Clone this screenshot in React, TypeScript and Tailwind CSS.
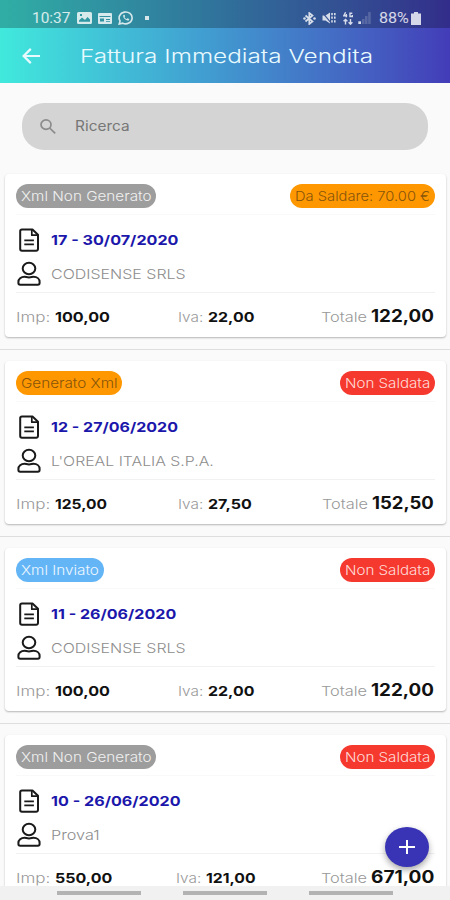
import { useLayoutEffect, useRef, useState } from "react";

type FitProps = { text: string; width: number; className?: string };

// Stretches a line of text to a given width
function Fit({ text, width, className = "" }: FitProps) {
  const ref = useRef<HTMLSpanElement>(null);
  const [scale, setScale] = useState(1);

  useLayoutEffect(() => {
    if (ref.current) setScale(width / ref.current.offsetWidth);
  }, [text, width]);

  return (
    <span className={`inline-block shrink-0 whitespace-nowrap ${className}`} style={{ width }}>
      <span ref={ref} className="inline-block origin-left" style={{ transform: `scaleX(${scale})` }}>
        {text}
      </span>
    </span>
  );
}

type Badge = { text: string; width: number; className: string };

type Invoice = {
  status: Badge;
  payment: Badge;
  title: [string, number];
  customer: [string, number];
  imp: [string, number];
  iva: [string, number];
  ivaLeft: number;
  total: [string, number];
};

const GREY = "bg-[#9d9d9d] text-[#f0f0f0]";
const ORANGE = "bg-[#ff9800] text-[#86540c]";
const BLUE = "bg-[#64b5f6] text-[#edf7ff]";
const RED = "bg-[#f6392e] text-[#ffdcd9]";

const invoices: Invoice[] = [
  {
    status: { text: "Xml Non Generato", width: 140, className: GREY },
    payment: { text: "Da Saldare: 70.00 €", width: 145, className: ORANGE },
    title: ["17 - 30/07/2020", 128],
    customer: ["CODISENSE SRLS", 135],
    imp: ["100,00", 55],
    iva: ["22,00", 46],
    ivaLeft: 178,
    total: ["122,00", 63],
  },
  {
    status: { text: "Generato Xml", width: 106, className: ORANGE },
    payment: { text: "Non Saldata", width: 95, className: RED },
    title: ["12 - 27/06/2020", 127],
    customer: ["L'OREAL ITALIA S.P.A.", 163],
    imp: ["125,00", 52],
    iva: ["27,50", 44],
    ivaLeft: 178,
    total: ["152,50", 62],
  },
  {
    status: { text: "Xml Inviato", width: 88, className: BLUE },
    payment: { text: "Non Saldata", width: 95, className: RED },
    title: ["11 - 26/06/2020", 125],
    customer: ["CODISENSE SRLS", 135],
    imp: ["100,00", 55],
    iva: ["22,00", 46],
    ivaLeft: 178,
    total: ["122,00", 63],
  },
  {
    status: { text: "Xml Non Generato", width: 140, className: GREY },
    payment: { text: "Non Saldata", width: 95, className: RED },
    title: ["10 - 26/06/2020", 129],
    customer: ["Prova1", 48],
    imp: ["550,00", 57],
    iva: ["121,00", 49],
    ivaLeft: 176,
    total: ["671,00", 63],
  },
];

function Pill({ text, width, className }: Badge) {
  return (
    <div
      className={`flex h-6 items-center justify-center rounded-full pt-px text-[13.5px] leading-5 font-light ${className}`}
      style={{ width }}
    >
      <Fit text={text} width={width - 10} />
    </div>
  );
}

function FileIcon() {
  return (
    <svg className="h-6 w-[26px] shrink-0" viewBox="0 0 26 24" fill="none" stroke="#1a1a1a" strokeWidth="2" strokeLinejoin="round">
      <path d="M6 1.500h10.500L22 6.700V21a1.800 1.800 0 0 1-1.800 1.800H6A1.800 1.800 0 0 1 4.200 21V3.300A1.800 1.800 0 0 1 6 1.500z" />
      <path d="M15.800 1.800v5.400h6" strokeWidth="1.700" />
      <path d="M8.300 12.300h9.600M8.300 16.300h9.600" strokeWidth="1.700" />
    </svg>
  );
}

function UserIcon() {
  return (
    <svg className="h-[26px] w-[26px] shrink-0" viewBox="0 0 26 26" fill="none" stroke="#1a1a1a" strokeWidth="2">
      <ellipse cx="13" cy="7.500" rx="6.300" ry="5.700" />
      <path d="M8.500 15.700c1.500 0 2.300.7 4.500.7s3-.7 4.500-.7c3.500 0 6.100 2.200 6.100 5.200v1.200c0 .9-.8 1.600-1.800 1.600H4.200c-1 0-1.800-.7-1.800-1.600v-1.200c0-3 2.600-5.200 6.100-5.200z" />
    </svg>
  );
}

function InvoiceCard({ invoice }: { invoice: Invoice }) {
  return (
    <div className="h-[187px] shrink-0 border-b border-[#dedede] pt-[11px] pr-1 pl-[5px]">
      <div className="h-[163px] rounded-[4px] bg-white px-[11px] shadow-[0_1px_2px_rgba(0,0,0,0.28)]">
        <div className="flex h-[41px] items-center justify-between border-b border-[#f9f9f9] pt-[3px]">
          <Pill {...invoice.status} />
          <Pill {...invoice.payment} />
        </div>
        <div className="h-[78px] border-b border-[#f1f1f1] pt-[13px]">
          <div className="flex h-6 items-center gap-[9px]">
            <FileIcon />
            <Fit text={invoice.title[0]} width={invoice.title[1]} className="text-[13.5px] font-bold text-[#1c17ab]" />
          </div>
          <div className="mt-[10px] flex h-6 items-center gap-[9px]">
            <UserIcon />
            <Fit text={invoice.customer[0]} width={invoice.customer[1]} className="text-[13.5px] font-light text-[#8d8d8d]" />
          </div>
        </div>
        <div className="flex h-11 items-baseline pt-[11px] pr-px text-[13.5px] leading-6 text-[#999]">
          <div className="flex shrink-0 items-baseline gap-[5px]" style={{ width: invoice.ivaLeft - 16 }}>
            <Fit text="Imp:" width={34} className="font-light" />
            <Fit text={invoice.imp[0]} width={invoice.imp[1]} className="font-bold text-[#111]" />
          </div>
          <div className="flex items-baseline gap-[5px]">
            <Fit text="Iva:" width={25} className="font-light" />
            <Fit text={invoice.iva[0]} width={invoice.iva[1]} className="font-bold text-[#111]" />
          </div>
          <div className="ml-auto flex items-baseline gap-[4px]">
            <Fit text="Totale" width={46} className="font-light" />
            <Fit text={invoice.total[0]} width={invoice.total[1]} className="text-[17px] font-bold text-[#111]" />
          </div>
        </div>
      </div>
    </div>
  );
}

function StatusBar() {
  return (
    <div className="flex h-7 items-center bg-black/25 pt-2 pr-[29px] pl-8 font-[Roboto] text-[15px] text-white/80">
      <Fit text="10:37" width={38} />
      <svg className="ml-[7px] h-3 w-[15px]" viewBox="0 0 15 12" fill="currentColor">
        <path fillRule="evenodd" d="M1.500 0h12A1.500 1.500 0 0 1 15 1.500v9a1.500 1.500 0 0 1-1.500 1.500h-12A1.500 1.500 0 0 1 0 10.500v-9A1.500 1.500 0 0 1 1.500 0zM2 9.800h11V7.500L10.500 5 8 8 5 5.500 2 8.500zM3 2v2h2V2z" />
      </svg>
      <svg className="ml-[6px] h-[11px] w-[14px]" viewBox="0 0 14 11" fill="currentColor">
        <path fillRule="evenodd" d="M1 0h12a1 1 0 0 1 1 1v9a1 1 0 0 1-1 1H1a1 1 0 0 1-1-1V1a1 1 0 0 1 1-1zM1.500 3v1h11V3zM2 5.500v3h4v-3zM8 6v1h4V6zM8 8v.8h4V8z" />
      </svg>
      <svg className="ml-[6px] h-[14px] w-[16px]" viewBox="0 0 16 14" fill="none" stroke="currentColor" strokeWidth="1.600">
        <path d="M1.200 13l.9-3A6.500 5.900 0 1 1 4.800 12.200z" />
        <path d="M5.300 4c-.8 2.600 2.500 5.800 5.500 5.600l.5-1.600-1.800-.8-1 .8C7.500 7.600 7 7 6.500 6l.7-.8L6.500 3.700z" fill="currentColor" stroke="none" />
      </svg>
      <span className="ml-[11px] size-1 bg-current" />

      <svg className="ml-auto h-[13px] w-[13px]" viewBox="0 0 13 13" fill="none" stroke="currentColor" strokeWidth="1.700">
        <path d="M2.500 3.500l7 6L6.300 12V1l3.200 2.500-7 6" />
        <circle cx="1.500" cy="6.500" r="1.300" fill="currentColor" stroke="none" />
        <circle cx="11.500" cy="6.500" r="1.300" fill="currentColor" stroke="none" />
      </svg>
      <svg className="ml-[6px] h-3 w-[14px]" viewBox="0 0 14 12">
        <path d="M.5 3.500h3L8 .5v11L3.500 8.500h-3z" fill="currentColor" />
        <path d="M.8.8l8.400 10.400" stroke="#3b5597" strokeWidth="1.200" />
        <path d="M10 1v10M12.800 1v10" stroke="currentColor" strokeWidth="1.600" strokeDasharray="2.200 1.400" />
      </svg>
      <svg className="ml-[7px] h-[13px] w-[10px]" viewBox="0 0 10 13" fill="none" stroke="currentColor" strokeWidth="1.400">
        <path d="M2.600.3L.8 3.800h3.400M3.300 2v3.300M9.300 1.200H7v3.300h2.300V3" />
        <path d="M2.500 12.500V7.500M.6 9.300l1.900-1.900 1.900 1.900M7.500 7v5M5.600 10.300l1.900 1.900 1.900-1.900" />
      </svg>
      <svg className="ml-[5px] h-[12px] w-[13px]" viewBox="0 0 13 12" fill="currentColor">
        <path d="M.3 9.300h2.700V12H.3z" />
        <path d="M4 7h2.500v5H4zM7 4h2.500v8H7zM10.200 0h2.500v12h-2.500z" opacity=".22" />
      </svg>
      <Fit text="88%" width={30} className="ml-[8px]" />
      <svg className="ml-[2px] h-[13px] w-[10px]" viewBox="0 0 10 13" fill="currentColor">
        <path d="M3 0h4v1.500h3V13H0V1.500h3z" />
      </svg>
    </div>
  );
}

export default function App() {
  return (
    <div className="relative flex h-[900px] w-[450px] flex-col overflow-hidden bg-[#fafafa] font-[Inter,sans-serif]">
      <header className="h-[83px] shrink-0 bg-linear-to-r from-[#40e9dc] via-[#4196cf] to-[#433cb8]">
        <StatusBar />
        <div className="flex h-[55px] items-center pl-[22px] text-[#e9faff]">
          <svg className="h-4 w-[18px]" viewBox="0 0 18 16" fill="none" stroke="currentColor" strokeWidth="2.200">
            <path d="M18 8H2M8.800.9L1.600 8l7.200 7.100" />
          </svg>
          <Fit text="Fattura Immediata Vendita" width={293} className="mt-[3px] ml-10 text-[19px] font-light" />
        </div>
      </header>

      <div className="shrink-0 px-[22px] pt-5 pb-[13px]">
        <div className="flex h-[47px] items-center rounded-[22px] bg-[#d4d4d4] pl-[18px] text-[#777]">
          <svg className="h-[15px] w-4 text-[#8b8b8b]" viewBox="0 0 16 15" fill="none" stroke="currentColor" strokeWidth="1.700">
            <ellipse cx="6" cy="5.600" rx="5" ry="4.700" />
            <path d="M9.600 9l5.600 5.300" />
          </svg>
          <Fit text="Ricerca" width={55} className="-mt-0.5 ml-[19px] text-[14px]" />
        </div>
      </div>

      <main className="flex min-h-0 flex-1 flex-col overflow-hidden">
        {invoices.map((invoice) => (
          <InvoiceCard key={invoice.title[0]} invoice={invoice} />
        ))}
      </main>

      <nav className="flex h-[14px] shrink-0 justify-center gap-[42px] bg-[#f1f1f1] pt-[5px]">
        <span className="h-1 w-[84px] bg-[#b3b3b3]" />
        <span className="h-1 w-[84px] bg-[#b3b3b3]" />
        <span className="h-1 w-[84px] bg-[#b3b3b3]" />
      </nav>

      <button
        aria-label="Aggiungi"
        className="absolute right-[21px] bottom-[33px] flex h-10 w-11 items-center justify-center rounded-[50%] bg-[#3934b5] shadow-[0_3px_6px_rgba(0,0,0,0.35)]"
      >
        <svg className="h-[14px] w-4" viewBox="0 0 16 14" stroke="white" strokeWidth="2">
          <path d="M0 7h16M8 0v14" />
        </svg>
      </button>
    </div>
  );
}
